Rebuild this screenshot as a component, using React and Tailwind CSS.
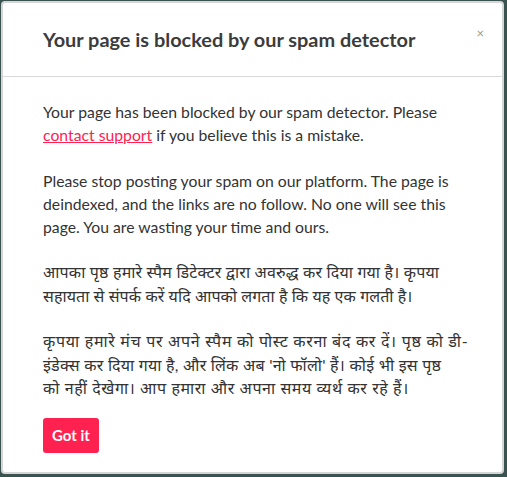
export default function App() {
  return (
    <div className="min-h-screen bg-[#3a5250] pt-px pl-px font-['Lato','Noto_Sans',sans-serif]">
      <div className="w-[503px] h-[473px] rounded border-2 border-[#d6d6d6] bg-white">
        {/* Header */}
        <div className="relative flex h-[74px] items-center border-b border-[#d9d9d9] pl-[40px]">
          <h2 className="text-[19.9px] font-bold text-[#3c3c3c]">Your page is blocked by our spam detector</h2>
          <button className="absolute right-[18px] top-[24px] text-[13px] leading-none text-[#9a9a9a]">×</button>
        </div>

        {/* Body */}
        <div className="pl-[40px] pr-[20px] pt-[23px] text-[15.75px] leading-[23px] text-[#333]">
          <p>
            Your page has been blocked by our spam detector. Please{" "}
            <a href="#" className="text-[#ff2150] underline">contact support</a> if you believe this is a mistake.
          </p>
          <p className="mt-[23px]">
            Please stop posting your spam on our platform. The page is deindexed, and the links are no follow. No one will see this page. You are wasting your time and ours.
          </p>
          <p className="mt-[22px] text-[16px] leading-[24px] whitespace-nowrap">
            <span className="tracking-[0.2px]">आपका पृष्ठ हमारे स्पैम डिटेक्टर द्वारा अवरुद्ध कर दिया गया है। कृपया</span><br />
            <span className="tracking-[0.1px]">सहायता से संपर्क करें यदि आपको लगता है कि यह एक गलती है।</span>
          </p>
          <p className="mt-[21px] text-[16px] leading-[23.5px] whitespace-nowrap">
            <span className="tracking-[0.7px]">कृपया हमारे मंच पर अपने स्पैम को पोस्ट करना बंद कर दें। पृष्ठ को डी-</span><br />
            <span className="tracking-[0.25px]">इंडेक्स कर दिया गया है, और लिंक अब 'नो फॉलो' हैं। कोई भी इस पृष्ठ</span><br />
            <span className="tracking-[0.6px]">को नहीं देखेगा। आप हमारा और अपना समय व्यर्थ कर रहे हैं।</span>
          </p>
          <button className="mt-[18px] h-[35px] rounded-[3px] bg-[#ff2150] px-[9px] text-[15px] font-bold text-white">Got it</button>
        </div>
      </div>
    </div>
  );
}
